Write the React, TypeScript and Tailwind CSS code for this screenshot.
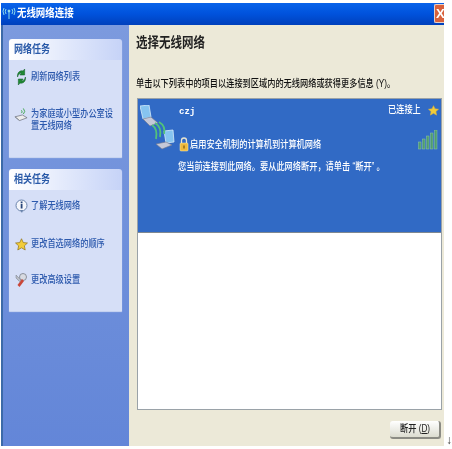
const FONT = "font-['Liberation_Sans','Noto_Sans_CJK_SC',sans-serif]";

function Squeeze({ children, className = "" }: { children: React.ReactNode; className?: string }) {
  return <span className={`inline-block origin-left scale-x-[0.82] whitespace-nowrap ${className}`}>{children}</span>;
}

function Antenna() {
  return (
    <svg width="14" height="12" viewBox="0 0 14 12" fill="none" stroke="#8fd8e8" strokeWidth="1">
      <path d="M7 3v8" />
      <circle cx="7" cy="3" r="1" fill="#c8f0f0" />
      <path d="M4 1Q2.500 3 4 6M10 1q1.500 2 0 5M2 0Q0 3 2 7M12 0q2 3 0 7" />
    </svg>
  );
}

function Refresh() {
  return (
    <svg width="11" height="16" viewBox="0 0 14 16" preserveAspectRatio="none">
      <path d="M2 8C1 4 5 1 9 2l2-2v6H5l2-2C5 4 3 5 2 8z" fill="#1f8a32" stroke="#14602a" strokeWidth=".6" />
      <path d="M12 8c1 4-3 7-7 6l-2 2v-6h6l-2 2c2 0 4-1 5-4z" fill="#1f8a32" stroke="#14602a" strokeWidth=".6" />
    </svg>
  );
}

function HomeNet() {
  return (
    <svg width="15" height="15" viewBox="0 0 15 15" fill="none">
      <path d="M1 10l8-2 5 3-8 3z" fill="#ececec" stroke="#6f7480" strokeWidth=".8" />
      <path d="M1 10l5 4" stroke="#8d929c" />
      <path d="M8 6q1.500-1 0-3M10 7q3-2.500 0-6" stroke="#3fa44e" strokeWidth="1" />
    </svg>
  );
}

function Info() {
  return (
    <svg width="13" height="15" viewBox="0 0 13 15">
      <circle cx="6.500" cy="6.500" r="5.500" fill="#f4f6fb" stroke="#6a84ac" />
      <path d="M5 11l2 3 1-3z" fill="#6a84ac" />
      <rect x="5.700" y="2.500" width="1.800" height="1.800" fill="#27457a" />
      <rect x="5.700" y="5" width="1.800" height="4.500" fill="#27457a" />
    </svg>
  );
}

function Star({ size = 14, stroke = "#8a6a10" }: { size?: number; stroke?: string }) {
  return (
    <svg width={size} height={size} viewBox="0 0 14 14">
      <path d="M7 .8l1.900 4.100 4.500.5-3.300 3 .9 4.500L7 10.600l-4 2.300.9-4.500-3.300-3 4.500-.5z" fill="#f2cc3a" stroke={stroke} strokeWidth=".7" />
    </svg>
  );
}

function Wrench() {
  return (
    <svg width="13" height="16" viewBox="0 0 13 16">
      <circle cx="8" cy="5" r="3.500" fill="#d8dbe2" stroke="#777d88" strokeWidth=".8" />
      <path d="M1 3l5 5-1.500 1.500L1 6z" fill="#b9bdc6" stroke="#777d88" strokeWidth=".5" />
      <path d="M7 7l-4.500 6 2 2L9 9z" fill="#c9473a" />
    </svg>
  );
}

function Laptops() {
  return (
    <svg width="36" height="46" viewBox="0 0 36 46" fill="none">
      <path d="M0 1l9-1 2 12-8 2z" fill="#86c4f0" stroke="#d6ecfa" strokeWidth=".8" />
      <path d="M3 14l8-2 7 6-8 3z" fill="#c4c8d8" stroke="#70778c" strokeWidth=".6" />
      <path d="M24 26l9-1 1 12-8 1z" fill="#86c4f0" stroke="#d6ecfa" strokeWidth=".8" />
      <path d="M16 39l10-2 6 3-10 4z" fill="#c4c8d8" stroke="#70778c" strokeWidth=".6" />
      <path d="M12 20q6 4 4 14M15 18q7 4 5 14M19 17q7 4 5 12" stroke="#52c27a" strokeWidth="1.800" />
    </svg>
  );
}

function Lock() {
  return (
    <svg width="10" height="15" viewBox="0 0 10 15">
      <path d="M2.500 6V3.500a2.500 2.500 0 0 1 5 0V6" fill="none" stroke="#e8e4d0" strokeWidth="1.300" />
      <rect x="1" y="6" width="8" height="8" rx="1" fill="#eeb93e" stroke="#fff0b0" strokeWidth=".5" />
      <rect x="4.300" y="8.500" width="1.400" height="3" fill="#8a6410" />
    </svg>
  );
}

function Signal() {
  return (
    <svg width="21" height="20" viewBox="0 0 21 20">
      {[0, 1, 2, 3, 4].map((i) => (
        <rect key={i} x={i * 4 + 0.5} y={12 - i * 3} width="2.500" height={7 + i * 3} fill="#4f9d6e" stroke="#8fc4a4" strokeWidth=".5" />
      ))}
    </svg>
  );
}

function Panel({ title, bodyClass, children }: { title: string; bodyClass: string; children: React.ReactNode }) {
  return (
    <section className="rounded-t-[3px] shadow-[0_1px_1px_#ffffffaa]">
      <div className="flex h-[21px] items-center rounded-t-[3px] bg-gradient-to-r from-white to-[#c6d3f7] pl-[5px]">
        <Squeeze className="text-[11px] font-bold text-[#2a5aa8]">{title}</Squeeze>
      </div>
      <div className={`flex flex-col bg-[#d6dff7] pl-[5px] ${bodyClass}`}>{children}</div>
    </section>
  );
}

function Task({ icon, lines, className = "" }: { icon: React.ReactNode; lines: string[]; className?: string }) {
  return (
    <div className={`flex items-start gap-[3px] text-[#2c59ad] ${className}`}>
      <span className="flex h-[12px] w-[14px] shrink-0 items-center justify-center">{icon}</span>
      <div className="flex flex-col text-[10px] font-medium leading-[12px]">
        {lines.map((l) => (
          <Squeeze key={l}>{l}</Squeeze>
        ))}
      </div>
    </div>
  );
}

export default function App() {
  return (
    <div className={`h-[449px] w-[452px] overflow-hidden bg-white pl-[1px] pt-[3px] blur-[0.35px] ${FONT}`}>
      <div className="relative flex h-[443px] w-[443px] flex-col">
        <header className="flex h-[22px] shrink-0 items-center gap-[1px] overflow-hidden bg-gradient-to-b from-[#0a63ea] via-[#0052dc] to-[#0040bc] pb-[1px] pl-[1px]">
          <Antenna />
          <Squeeze className="text-[11.5px] font-bold text-white">无线网络连接</Squeeze>
          <div className="ml-auto flex h-[19px] w-[10px] items-center justify-start overflow-hidden rounded-l-[2px] border border-r-0 border-[#e8d0c8] bg-[#d8613c] pl-[1px] text-[13px] font-bold leading-none text-white">
            X
          </div>
        </header>
        <div className="flex min-h-0 flex-1">
          <aside className="flex w-[128px] shrink-0 flex-col gap-[12px] border-l-2 border-[#3c6aa8] bg-gradient-to-b from-[#7c9ade] to-[#6386d8] pl-[6px] pr-[7px] pt-[14px]">
            <Panel title="网络任务" bodyClass="h-[97px] pt-[11px]">
              <Task icon={<Refresh />} lines={["刷新网络列表"]} className="h-[37px]" />
              <Task icon={<HomeNet />} lines={["为家庭或小型办公室设", "置无线网络"]} />
            </Panel>
            <Panel title="相关任务" bodyClass="h-[121px] pt-[10px]">
              <Task icon={<Info />} lines={["了解无线网络"]} className="h-[38px]" />
              <Task icon={<Star size={13} />} lines={["更改首选网络的顺序"]} className="h-[36px]" />
              <Task icon={<Wrench />} lines={["更改高级设置"]} />
            </Panel>
          </aside>
          <main className="flex min-w-0 flex-1 flex-col bg-[#ece9d8] pl-[7px] pr-[2px] pt-[5px]">
            <h1 className="h-[40px] text-[#222]">
              <Squeeze className="text-[14px] font-bold leading-[22px]">选择无线网络</Squeeze>
            </h1>
            <p className="h-[28px] text-[#111]">
              <Squeeze className="text-[10px] font-medium leading-[14px]">单击以下列表中的项目以连接到区域内的无线网络或获得更多信息 (Y)。</Squeeze>
            </p>
            <div className="ml-[1px] flex h-[312px] flex-col border border-[#9aa2a8] bg-white">
              <div className="flex h-[134px] border-b border-[#7f8890] bg-[#316ac5] text-white">
                <div className="pl-[2px] pt-[6px]">
                  <Laptops />
                </div>
                <div className="flex flex-1 flex-col pl-[2px] pt-[7px]">
                  <div className="flex h-[28px] items-start">
                    <span className="ml-[1px] font-['Liberation_Mono',monospace] text-[9px] font-bold leading-[12px]">czj</span>
                    <div className="-mt-[2px] ml-auto flex items-center pr-[2px]">
                      <Squeeze className="text-[10px] font-medium leading-[12px]">已连接上</Squeeze>
                      <Star size={11} stroke="#d8b040" />
                    </div>
                  </div>
                  <div className="flex h-[20px] items-center">
                    <span className="ml-[1px] mr-[1px]">
                      <Lock />
                    </span>
                    <Squeeze className="text-[10px] font-medium">启用安全机制的计算机到计算机网络</Squeeze>
                    <span className="mb-[8px] ml-auto pr-[2px]">
                      <Signal />
                    </span>
                  </div>
                  <Squeeze className="mt-[6px] text-[10px] font-medium leading-[14px]">您当前连接到此网络。要从此网络断开，请单击 “断开” 。</Squeeze>
                </div>
              </div>
            </div>
            <div className="flex justify-end pr-[1px] pt-[11px]">
              <button className="flex h-[18px] w-[51px] items-center justify-center rounded-[3px] border-b-2 border-r-2 border-[#8b8b84] bg-gradient-to-b from-white to-[#dcdcd0] text-[#222]">
                <Squeeze className="translate-x-[4px] text-[10px] font-medium leading-none">断开 (<span className="underline">D</span>)</Squeeze>
              </button>
            </div>
          </main>
        </div>
        <span className="absolute -right-[8px] bottom-[0px] text-[12px] leading-none text-[#444]">↓</span>
      </div>
    </div>
  );
}
